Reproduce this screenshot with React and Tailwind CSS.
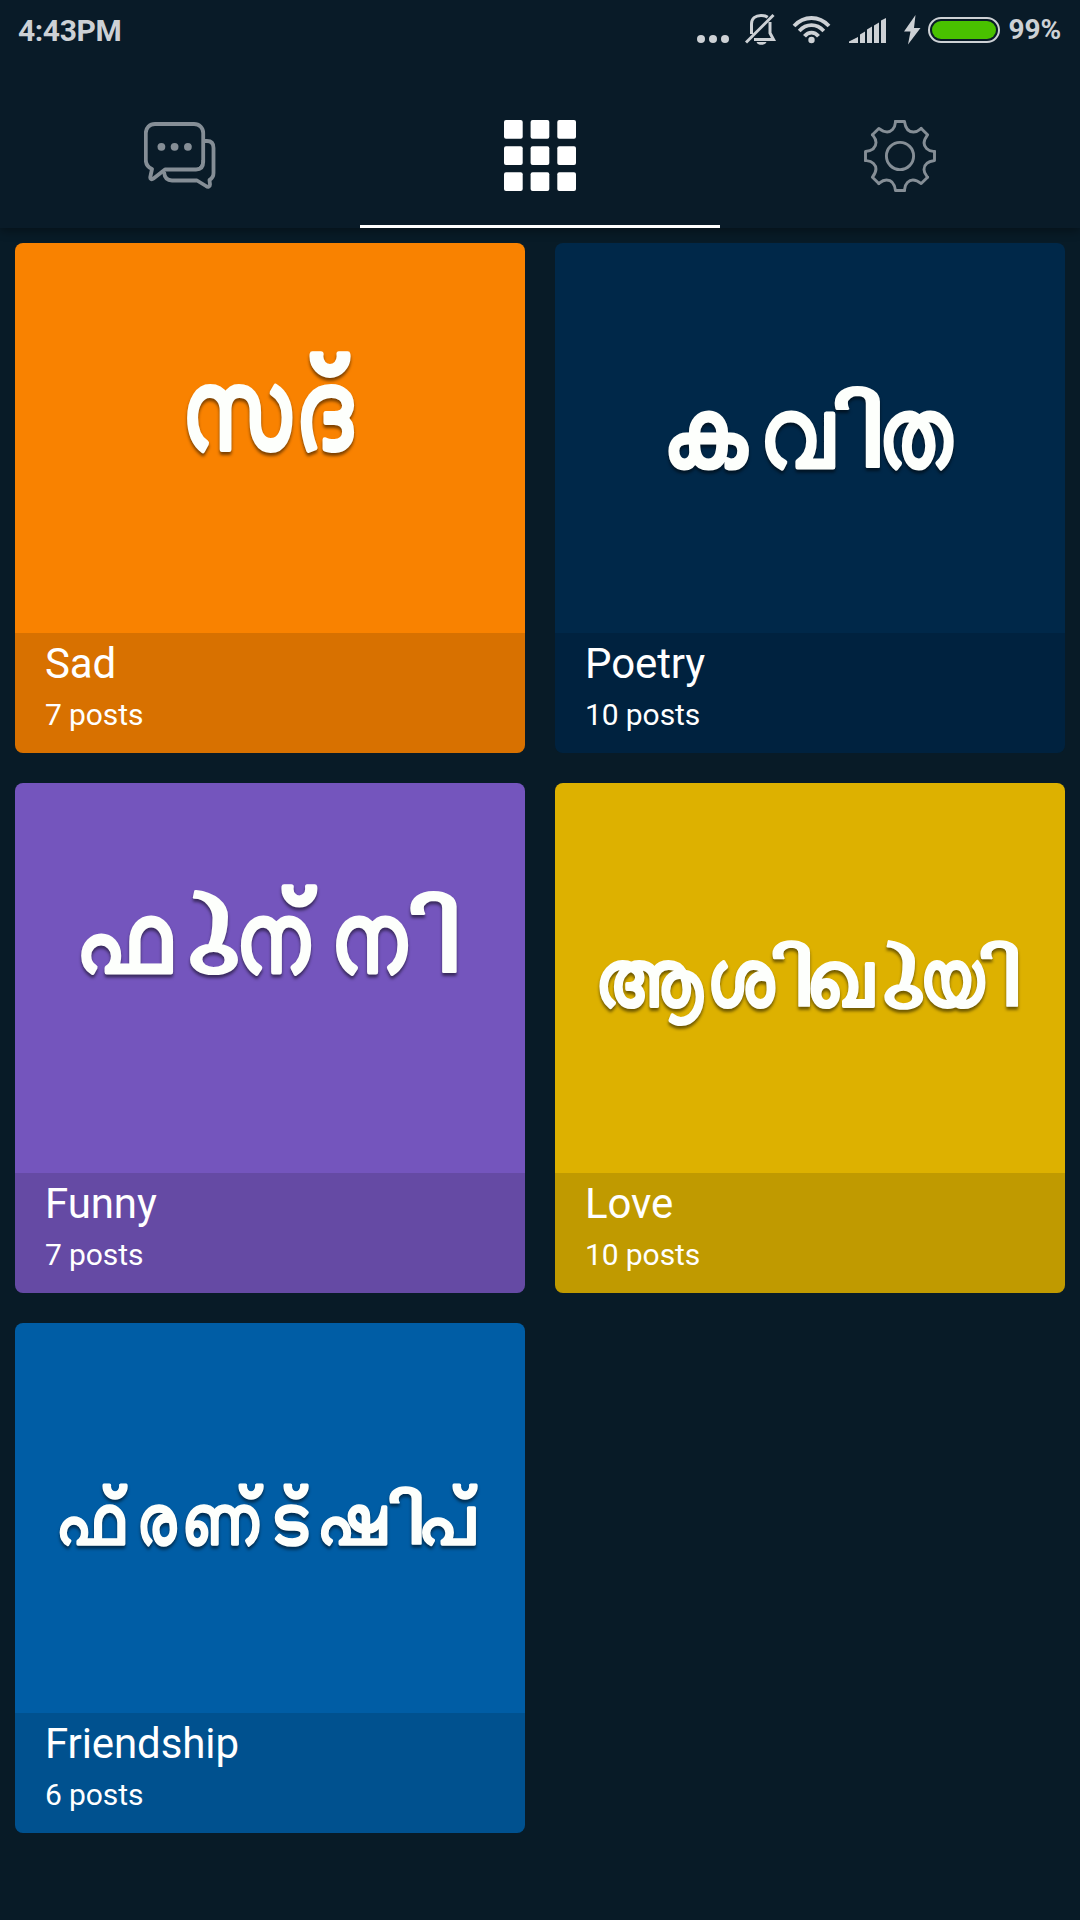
import React, { useState } from "react";

// glyphs: [text, x, width, dy] on a 510x390 artwork
const categories = [
  {
    id: "sad",
    title: "Sad",
    posts: 7,
    bg: "bg-[#f98200]",
    size: 111,
    baseline: 206,
    glyphs: [["സ", 167, 108], ["ദ", 280, 57], ["\u00a0്", 266, null, -12]],
  },
  {
    id: "poetry",
    title: "Poetry",
    posts: 10,
    bg: "bg-[#002849]",
    size: 97,
    baseline: 224,
    glyphs: [["ക", 108, 84], ["വ", 205, 73], ["\u00a0ി", 241, 84], ["ത", 324, 73]],
  },
  {
    id: "funny",
    title: "Funny",
    posts: 7,
    bg: "bg-[#7455bd]",
    size: 97,
    baseline: 189,
    glyphs: [["ഫ", 61, 95], ["\u00a0ു", 106, 115, -27], ["ന", 221, 73], ["\u00a0്", 241, null, -13], ["ന", 316, 75], ["\u00a0ി", 356, 86]],
  },
  {
    id: "love",
    title: "Love",
    posts: 10,
    bg: "bg-[#ddb100]",
    size: 79,
    baseline: 223,
    glyphs: [["ആ", 40, 107], ["ശ", 152, 67], ["\u00a0ി", 185, 70], ["ഖ", 251, 67], ["\u00a0ു", 273, 93, -21], ["യ", 365, 64], ["\u00a0ി", 393, 70]],
  },
  {
    id: "friendship",
    title: "Friendship",
    posts: 6,
    bg: "bg-[#005da5]",
    size: 68,
    baseline: 221,
    glyphs: [["ഫ", 41, 68], ["\u00a0്", 70, null, -8], ["ര", 122, 39], ["ണ", 167, 76], ["\u00a0്", 206, null, -8], ["ട", 256, 36], ["\u00a0്", 251, null, -8], ["ഷ", 302, 69], ["\u00a0ി", 347, 60], ["പ", 403, 56], ["\u00a0്", 420, null, -8]],
  },
];

function StatusBar() {
  return (
    <div className="flex h-[60px] items-center pl-[18px] pr-[19px] text-[#cdd1d5]">
      <span className="text-[30px] font-bold tracking-[-0.4px]">4:43PM</span>
      <div className="ml-auto flex items-center">
        <svg width="32" height="60" viewBox="0 0 32 60" fill="currentColor">
          <circle cx="4" cy="39" r="4" />
          <circle cx="16" cy="39" r="4" />
          <circle cx="28" cy="39" r="4" />
        </svg>
        <svg className="ml-[16px]" width="32" height="60" viewBox="0 0 32 60" fill="none" stroke="currentColor" strokeWidth="3">
          <path d="M1 42.500 28.500 15" />
          <path d="M6.500 34V24C6.500 18.500 10.500 15.500 16 15.500C18.500 15.500 21 16 22.700 17.300" />
          <path d="M25 22V33L28.500 39.500H9" />
          <path d="M11.500 42H21.500C20 45.800 13 45.800 11.500 42Z" fill="currentColor" stroke="none" />
        </svg>
        <svg className="ml-[15px]" width="40" height="60" viewBox="0 0 40 60" fill="none" stroke="currentColor" strokeWidth="3.800">
          <path d="M2 26C12 15.300 27 15.300 37 26" />
          <path d="M7.200 31C14.500 23.300 24.500 23.300 31.800 31" />
          <path d="M12.500 36.300C16.500 31.300 22.500 31.300 26.500 36.300" />
          <circle cx="19.500" cy="40" r="3.200" fill="currentColor" stroke="none" />
        </svg>
        <svg className="ml-[17px]" width="38" height="60" viewBox="0 0 38 60" fill="currentColor">
          <path d="M0 43V41.500L9 37V43Z" />
          <path d="M11 43V34.500L16 31.500V43Z" />
          <path d="M18 43V29.500L23 26.500V43Z" />
          <path d="M25 43V25.500L30 22.500V43Z" />
          <path d="M32 43V20.500L37 18V43Z" />
        </svg>
        <svg className="ml-[17px]" width="17" height="60" viewBox="0 0 17 60" fill="currentColor">
          <path d="M11.500 15 0 31.500H6.500L4 44.500 16.500 28H10Z" />
        </svg>
        <div className="ml-[7px] h-[26px] w-[72px] rounded-full border-2 border-[#cdd1d5] p-[2px]">
          <div className="h-full w-full rounded-full bg-[#49c100]" />
        </div>
        <span className="ml-[8px] text-[28px] font-bold tracking-[-0.1px]">99%</span>
      </div>
    </div>
  );
}

function ChatIcon() {
  return (
    <svg width="72" height="72" viewBox="0 0 72 72" fill="none" stroke="currentColor" strokeWidth="3.800" strokeLinejoin="round">
      <path d="M11 4H50C55.500 4 59.200 8 59.200 13V42C59.200 47 57 49.500 52 49.500H21L9.500 58.500C7.500 60 6 59 6.300 57L8 49C4.500 47.500 1.800 45 1.800 40V13C1.800 8 5.500 4 11 4Z" />
      <path d="M60 21H63C67.500 21 69.500 23.500 69.500 28V53C69.500 56.500 68 58.500 65.500 60L66 64.500C66 67 64 67.500 62 66L53 60.500H28C23 60.500 20.500 57 20 52" />
      <path d="M58 40C58 46 55 48.500 50 49H54C58 49 59.500 47 59.500 43Z" fill="currentColor" strokeWidth="1" />
      <g fill="currentColor" stroke="none">
        <circle cx="17.400" cy="26.800" r="3.900" />
        <circle cx="30.600" cy="26.800" r="3.900" />
        <circle cx="43.900" cy="26.800" r="3.900" />
      </g>
    </svg>
  );
}

function GridIcon() {
  return (
    <svg width="72" height="72" viewBox="0 0 72 72" fill="currentColor">
      {[0, 26.600, 53.300].map((x) =>
        [0, 26.200, 52.300].map((y) => (
          <rect key={`${x}-${y}`} x={x} y={y} width="18.700" height="18.700" rx="2" />
        ))
      )}
    </svg>
  );
}

function GearIcon() {
  return (
    <svg width="72" height="72" viewBox="-36 -36 72 72" fill="none" stroke="currentColor" strokeWidth="2.900" strokeLinejoin="round" strokeLinecap="round">
      <circle r="13.600" />
      {[0, 45, 90, 135, 180, 225, 270, 315].map((a) => (
        <path key={a} transform={`rotate(${a})`} d="M-4.500 -34.500H4.500C5.300 -28.500 8 -24 13.500 -24C17.500 -24 19 -25.800 21.200 -27.600" />
      ))}
    </svg>
  );
}

const tabs = [
  { id: "chat", Icon: ChatIcon },
  { id: "grid", Icon: GridIcon },
  { id: "settings", Icon: GearIcon },
];

function Artwork({ item }) {
  return (
    <svg
      className="font-[sans-serif] font-bold drop-shadow-[0_3px_1.5px_rgba(0,0,0,0.5)]"
      width="510"
      height="390"
      viewBox="0 0 510 390"
      fill="#fdfffc"
      stroke="#fdfffc"
      strokeWidth={item.size * 0.022}
      strokeLinejoin="round"
      fontSize={item.size}
    >
      <text>
        {item.glyphs.map(([text, x, w, dy = 0], i) => {
          // vowel signs are stretched sideways, so they get the lighter weight
          const wide = w && text.startsWith("\u00a0");
          return (
            <tspan
              key={i}
              x={x}
              y={item.baseline + dy}
              textLength={w || undefined}
              lengthAdjust={w ? "spacingAndGlyphs" : undefined}
              className={wide ? "font-normal" : "font-bold"}
            >
              {text}
            </tspan>
          );
        })}
      </text>
    </svg>
  );
}

function CategoryCard({ item }) {
  return (
    <div className={`flex h-[510px] flex-col overflow-hidden rounded-[8px] ${item.bg}`}>
      <Artwork item={item} />
      <div className="h-[120px] bg-black/[0.13] px-[30px] pt-[6px] text-white">
        <div className="text-[42px] leading-[49px] tracking-[-0.1px]">{item.title}</div>
        <div className="mt-[9px] text-[30px] leading-[35px] tracking-[-0.1px]">{item.posts} posts</div>
      </div>
    </div>
  );
}

export default function App() {
  const [active, setActive] = useState("grid");

  return (
    <div className="min-h-[1920px] w-[1080px] bg-[#081b27] font-[Roboto,sans-serif]">
      <header className="relative bg-[#091b28] shadow-[0_3px_9px_rgba(0,0,0,0.35)]">
        <StatusBar />
        <nav className="grid grid-cols-3">
          {tabs.map(({ id, Icon }) => (
            <button
              key={id}
              onClick={() => setActive(id)}
              className={`flex h-[168px] justify-center border-b-[3px] pt-[60px] ${
                active === id ? "border-white text-white" : "border-transparent text-[#858e96]"
              }`}
            >
              <Icon />
            </button>
          ))}
        </nav>
      </header>

      <main className="grid grid-cols-2 gap-[30px] p-[15px]">
        {categories.map((item) => (
          <CategoryCard key={item.id} item={item} />
        ))}
      </main>
    </div>
  );
}
